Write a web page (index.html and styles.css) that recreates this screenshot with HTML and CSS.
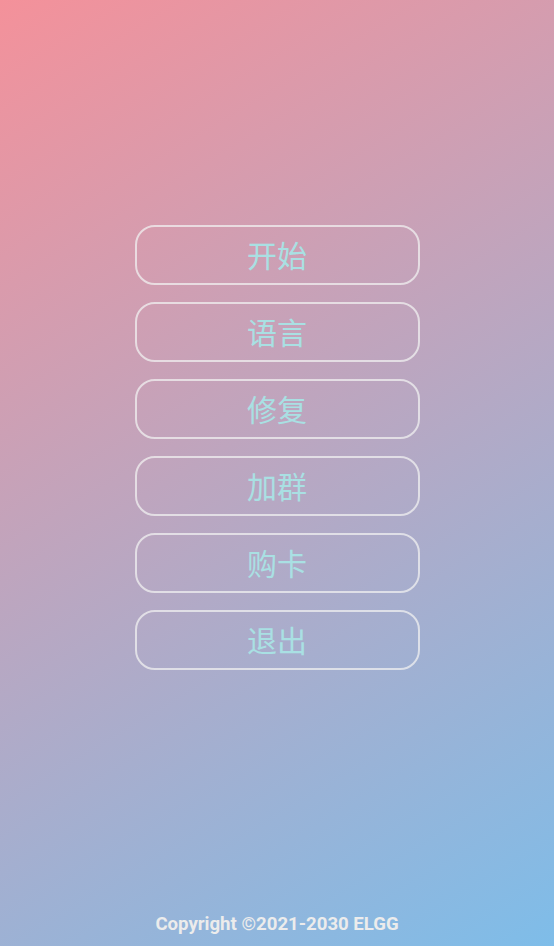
FILE: index.html
```html
<!DOCTYPE html>
<html>
<head>
<meta charset="UTF-8">
<title>Menu</title>
<link rel="stylesheet" href="styles.css">
</head>
<body>
<div class="page">
  <div class="menu">
    <div class="btn">开始</div>
    <div class="btn">语言</div>
    <div class="btn">修复</div>
    <div class="btn">加群</div>
    <div class="btn">购卡</div>
    <div class="btn">退出</div>
  </div>
  <div class="footer">Copyright ©2021-2030 ELGG</div>
</div>
</body>
</html>
```

FILE: styles.css
```css
* {
    margin: 0px;
    padding: 0px;
    box-sizing: border-box;
}
html, body {
    height: 100%;
}
body {
    background: linear-gradient(149deg, #f4919a, #7ebde9);
    font-family: "Noto Sans CJK SC", "Noto Sans", sans-serif;
}
.page {
    height: 100%;
    display: flex;
    flex-direction: column;
    align-items: center;
}
.menu {
    padding-top: 225px;
    display: flex;
    flex-direction: column;
    gap: 17px;
}
.btn {
    width: 285px;
    height: 60px;
    border: 2px solid rgba(240,240,240,0.75);
    border-radius: 20px;
    display: flex;
    justify-content: center;
    align-items: center;
    padding-bottom: 3px;
    color: #a9e0e3;
    font-size: 30px;
    cursor: pointer;
}
.footer {
    margin-top: auto;
    padding-bottom: 11px;
    font-family: Roboto, "Liberation Sans", sans-serif;
    font-weight: bold;
    font-size: 18.6px;
    color: #ececec;
}
```
